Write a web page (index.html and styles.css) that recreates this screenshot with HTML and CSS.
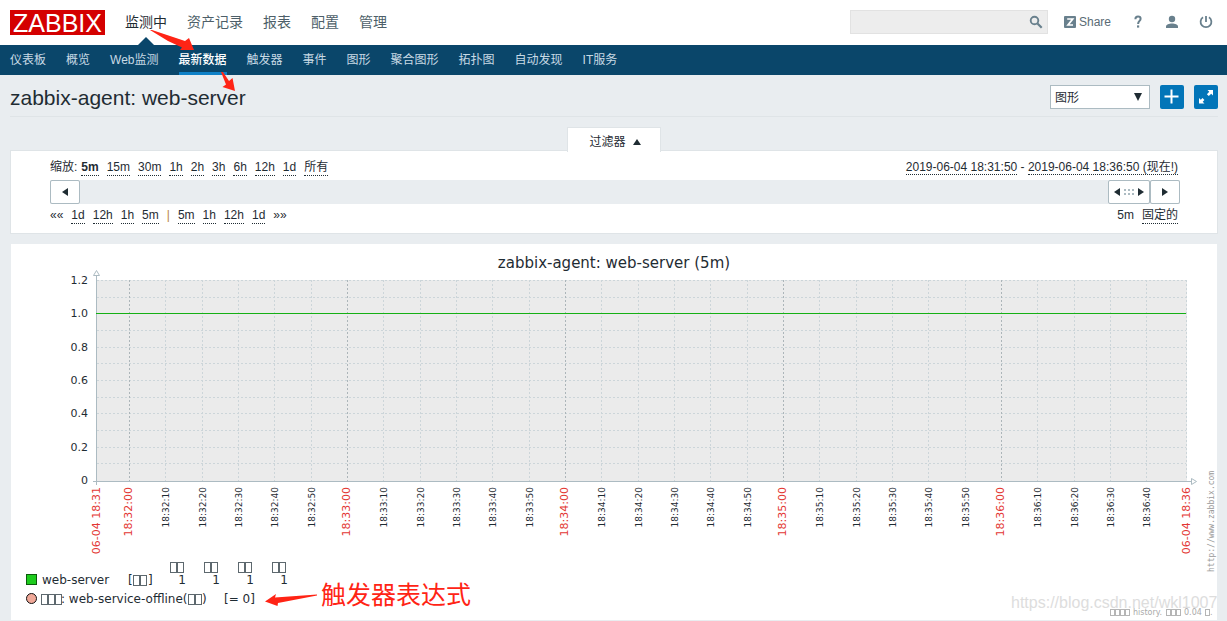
FILE: index.html
```html
<!DOCTYPE html>
<html lang="zh-CN">
<head>
<meta charset="utf-8">
<meta name="viewport" content="width=device-width, initial-scale=1">
<title>zabbix-agent: web-server</title>
<link rel="stylesheet" href="styles.css">
</head>
<body>
<header class="topbar">
  <a class="logo" href="#" aria-label="Zabbix">ZABBIX</a>
  <nav class="mainnav">
    <a class="current" href="#">监测中</a>
    <a href="#">资产记录</a>
    <a href="#">报表</a>
    <a href="#">配置</a>
    <a href="#">管理</a>
  </nav>
  <form class="search">
    <input type="text" aria-label="Search">
    <button type="button" aria-label="Search">
      <svg width="14" height="14" viewBox="0 0 14 14"><circle cx="5.5" cy="5.5" r="3.8" fill="none" stroke="#69808d" stroke-width="1.9"/><path d="M8.5 8.5L12.7 12.7" stroke="#69808d" stroke-width="2.2"/></svg>
    </button>
  </form>
  <div class="tools">
    <a class="share" href="#">
      <svg width="12" height="12" viewBox="0 0 12 12"><rect width="12" height="12" rx="1" fill="#69808d"/><path d="M3.2 3H8.7L4 9H9" fill="none" stroke="#fff" stroke-width="1.7"/></svg>
      <span>Share</span>
    </a>
    <a href="#" aria-label="Help"><svg width="14" height="14" viewBox="0 0 14 14"><path d="M4.4 4.2C4.4 2 5.6 1.5 7 1.5C8.6 1.5 9.6 2.4 9.6 3.8C9.6 5.9 7.1 6 7.1 9" fill="none" stroke="#69808d" stroke-width="2"/><rect x="6" y="10.400" width="2.200" height="2.200" fill="#69808d"/></svg></a>
    <a href="#" aria-label="Profile"><svg width="14" height="14" viewBox="0 0 14 14"><circle cx="7" cy="4" r="3.2" fill="#69808d"/><path d="M1 13V11.500C1 9.500 4 8.500 7 8.500S13 9.500 13 11.500V13Z" fill="#69808d"/></svg></a>
    <a href="#" aria-label="Sign out"><svg width="14" height="14" viewBox="0 0 14 14"><path d="M4 2.300A5.400 5.400 0 1 0 10 2.300M7 1V7" fill="none" stroke="#69808d" stroke-width="1.800"/></svg></a>
  </div>
</header>
<nav class="subnav">
  <a href="#">仪表板</a>
  <a href="#">概览</a>
  <a href="#">Web监测</a>
  <a class="current" href="#">最新数据</a>
  <a href="#">触发器</a>
  <a href="#">事件</a>
  <a href="#">图形</a>
  <a href="#">聚合图形</a>
  <a href="#">拓扑图</a>
  <a href="#">自动发现</a>
  <a href="#">IT服务</a>
</nav>
<main class="page">
  <div class="pagehead">
    <h1>zabbix-agent: web-server</h1>
    <div class="picker">
      <select aria-label="View"><option>图形</option><option>值</option></select>
      <svg width="8" height="8" viewBox="0 0 8 8"><path d="M0 0H8L4 8Z" fill="#1f2c33"/></svg>
    </div>
    <button class="action" type="button" aria-label="Add"><svg width="24" height="24" viewBox="0 0 24 24"><path d="M11.500 4.500V18.500M4.500 11.500H18.500" stroke="#fff" stroke-width="2"/></svg></button>
    <button class="action" type="button" aria-label="Fullscreen"><svg width="24" height="24" viewBox="0 0 24 24"><path d="M13.500 5H19V10.500L17.200 8.700L14.800 11.100L12.900 9.200L15.300 6.800ZM5 13L6.800 14.800L8.500 13.100L10.400 15L8.700 16.700L10.500 18.500H5Z" fill="#fff"/></svg></button>
  </div>
  <div class="tabrow">
    <button class="filtertab" type="button">过滤器<svg width="8" height="6" viewBox="0 0 8 6"><path d="M4 0L8 6H0Z" fill="#1f2c33"/></svg></button>
  </div>
  <section class="filter">
    <div class="line">
      <div class="links">
        <span class="caption">缩放:</span>
        <a class="selected" href="#">5m</a><a href="#">15m</a><a href="#">30m</a><a href="#">1h</a><a href="#">2h</a><a href="#">3h</a><a href="#">6h</a><a href="#">12h</a><a href="#">1d</a><a href="#">所有</a>
      </div>
      <div class="period"><a href="#">2019-06-04 18:31:50</a> - <a href="#">2019-06-04 18:36:50 (现在!)</a></div>
    </div>
    <div class="scrollbar">
      <button class="step" type="button" aria-label="Back"><svg width="6" height="8" viewBox="0 0 6 8"><path d="M6 0V8L0 4Z" fill="#1f2c33"/></svg></button>
      <button class="grip" type="button" aria-label="Range"><svg width="30" height="8" viewBox="0 0 30 8"><path d="M6 0V8L0 4ZM24 0V8L30 4Z" fill="#1f2c33"/><path d="M10 1h2v2h-2zM14 1h2v2h-2zM18 1h2v2h-2zM10 5h2v2h-2zM14 5h2v2h-2zM18 5h2v2h-2z" fill="#acbbc2"/></svg></button>
      <button class="step" type="button" aria-label="Forward"><svg width="6" height="8" viewBox="0 0 6 8"><path d="M0 0V8L6 4Z" fill="#1f2c33"/></svg></button>
    </div>
    <div class="line">
      <div class="links">
        <span>««</span><a href="#">1d</a><a href="#">12h</a><a href="#">1h</a><a href="#">5m</a><span class="divider">|</span><a href="#">5m</a><a href="#">1h</a><a href="#">12h</a><a href="#">1d</a><span>»»</span>
      </div>
      <div class="links"><span>5m</span><a href="#">固定的</a></div>
    </div>
  </section>
  <section class="graph">
    <svg class="chart" viewBox="11 244 1206 376" role="img" aria-label="zabbix-agent: web-server (5m)">
      <text class="title" x="614" y="268">zabbix-agent: web-server (5m)</text>
      <rect x="97" y="280" width="1090" height="201" fill="#ebebeb"/>
      <g id="grid"></g>
      <path d="M96.500 275V485M93 481.500H1191" stroke="#acbbc2" fill="none"/>
      <path d="M93.500 275.500H99.500L96.500 270.500ZM1191.500 478.500V484.500L1196.500 481.500Z" fill="#fff" stroke="#acbbc2"/>
      <path d="M96 313.500H1186" stroke="#14b014"/>
      <g id="labels"></g>
      <text class="credit" transform="translate(1214 572) rotate(-90)">http://www.zabbix.com</text>

      <rect x="26.500" y="574.500" width="10" height="10" fill="#1dcb1d" stroke="#0b5a0b"/>
      <text class="key" x="42" y="584">web-server</text>
      <text class="key" x="128" y="584">[</text>
      <text class="key" x="148" y="584">]</text>
      <g class="key stats">
        <text x="186" y="584">1</text><text x="220" y="584">1</text><text x="254" y="584">1</text><text x="288" y="584">1</text>
      </g>
      <circle cx="31.500" cy="598.500" r="5" fill="#f0a898" stroke="#111"/>
      <text class="key" x="61" y="603">: web-service-offline(</text>
      <text class="key" x="202" y="603">)</text>
      <text class="key" x="224" y="603">[= 0]</text>
      <g id="boxes"></g>

      <text class="watermark" x="1011" y="608">https://blog.csdn.net/wkl1007</text>
      <text class="timing" x="1133" y="615">history.</text>
      <text class="timing" x="1184" y="615">0.04</text>
      <text class="timing" x="1210" y="615">.</text>
    </svg>
  </section>
</main>
<div class="notes">
  <svg width="480" height="621" viewBox="0 0 480 621">
    <path d="M150 30L152 30L185 41L189 38L194 50L180 50L182 47.500L168 41ZM221 72L223 72L229 81L232.500 78L235 91L222.500 87L226 84.500ZM265 601.500L276 594L275 597.500L317 594.500V595.500L278 603L277.500 606Z" fill="#ff2415"/>
  </svg>
  <span class="note">触发器表达式</span>
</div>
<script src="chart.js"></script>
</body>
</html>
```
FILE: styles.css
```css
* { box-sizing: border-box; }
body {
  margin: 0;
  position: relative;
  background: #e9edf0;
  color: #1f2c33;
  font: 12px/16px "Liberation Sans", "Noto Sans CJK SC", sans-serif;
}
a { color: inherit; text-decoration: none; }
svg { display: block; }
button, input, select { font: inherit; color: inherit; margin: 0; padding: 0; }

.topbar { display: flex; align-items: center; height: 45px; padding: 0 14px 0 10px; background: #fff; }
.logo {
  width: 95px; height: 25px; background: #d40000; color: #fff;
  font: 25px/26px "Liberation Sans", sans-serif; text-align: center; white-space: nowrap;
}
.mainnav { display: flex; gap: 20px; margin-left: 20px; font-size: 14px; line-height: 45px; color: #4d5f69; }
.mainnav .current { position: relative; color: #1f2c33; }
.mainnav .current::after {
  content: ""; position: absolute; left: 50%; bottom: 0; margin-left: -8px;
  border: 8px solid transparent; border-top: 0; border-bottom-color: #0a466a;
}
.search { display: flex; align-items: center; width: 198px; height: 24px; margin: 0 0 1px auto; background: #ededed; border: 1px solid #e2e2e2; }
.search input { flex: 1; min-width: 0; height: 22px; border: 0; background: none; }
.search button { border: 0; background: none; padding-right: 4px; }
.tools { display: flex; align-items: center; gap: 20px; margin: 0 0 1px 16px; color: #5a6b75; }
.share { display: flex; align-items: center; gap: 3px; }

.subnav { display: flex; gap: 20px; height: 30px; padding: 0 10px; background: #0a466a; color: #c8dae5; line-height: 30px; }
.subnav .current { color: #fff; font-weight: 500; border-bottom: 3px solid #0f81c7; }

.page { padding: 0 9px 0 10px; }
.pagehead { display: flex; align-items: center; gap: 10px; height: 42px; padding-top: 2px; border-bottom: 1px solid #dfe4e7; }
h1 { flex: 1; margin: 0; font-size: 21px; line-height: 24px; font-weight: 400; padding-top: 3px; }
.picker { position: relative; width: 100px; height: 24px; }
.picker select { appearance: none; width: 100%; height: 100%; padding: 2px 4px 0; border: 1px solid #acbbc2; border-radius: 0; background: #fff; }
.picker svg { position: absolute; right: 8px; top: 8px; pointer-events: none; }
.action { width: 24px; height: 24px; border: 0; border-radius: 2px; background: #0275b8; }

.tabrow { display: flex; justify-content: center; padding-top: 10px; }
.filtertab {
  display: flex; align-items: center; justify-content: center; gap: 7px;
  width: 94px; height: 25px; padding: 3px 0 0 2px; margin-bottom: -2px; position: relative;
  background: #fff; border: 1px solid #dfe4e7; border-bottom: 0;
}
.filter { padding: 8px 37px 9px 39px; background: #fff; border: 1px solid #dfe4e7; }
.line { display: flex; justify-content: space-between; padding-right: 2px; }
.links { display: flex; gap: 8px; }
.line a { border-bottom: 1px dotted #1f2c33; }
.caption { margin-right: -4px; }
.selected { font-weight: 700; }
.divider { color: #b8863c; }
.scrollbar { display: flex; height: 24px; margin: 4px 0 3px; background: #e9edf0; }
.step, .grip { display: flex; align-items: center; justify-content: center; width: 30px; background: #fff; border: 1px solid #acbbc2; border-radius: 2px; }
.grip { width: 42px; margin-left: auto; }

.graph { margin-top: 10px; padding: 0 1px; }
.chart { width: 100%; height: auto; background: #fff; font-family: "DejaVu Sans", sans-serif; fill: #1f2c33; }
.title { font-size: 15px; text-anchor: middle; }
.value { font-size: 11px; text-anchor: end; }
.major { font-size: 11px; text-anchor: end; fill: #e33734; }
.minor { font-size: 9px; text-anchor: end; }
.key { font-size: 12px; }
.stats { text-anchor: end; }
.credit { font: 8px "DejaVu Sans Mono", monospace; fill: #999; }
.timing { font-size: 8px; fill: #aaa; }
.watermark { font: 16px "Liberation Sans", sans-serif; fill: #ddd; }

.notes { position: absolute; left: 0; top: 0; pointer-events: none; }
.note { position: absolute; left: 321px; top: 578px; color: #ff2415; font-size: 25px; line-height: 34px; white-space: nowrap; }
```
FILE: chart.js
```js
const NS = "http://www.w3.org/2000/svg";
function add(parent, name, attrs, text) {
  const el = document.createElementNS(NS, name);
  for (const key in attrs) el.setAttribute(key, attrs[key]);
  if (text) el.textContent = text;
  document.getElementById(parent).appendChild(el);
}

const left = 96, right = 1186, top_ = 280, bottom = 480;

for (let i = 0; i < 12; i++) {
  const y = Math.round(top_ + i * 200 / 12) + 0.5;
  add("grid", "path", { d: `M${left + 1} ${y}H${right}`, stroke: "#ccd5d9", "stroke-dasharray": "2 2" });
}
["1.2", "1.0", "0.8", "0.6", "0.4", "0.2", "0"].forEach((label, i) => {
  add("labels", "text", { class: "value", x: 88, y: Math.round(top_ + 4 + i * 200 / 6) }, label);
});

function timeLabel(x, label, kind) {
  const shift = kind === "major" ? 3 : 4;
  add("labels", "text", { class: kind, transform: `translate(${x + shift} 487) rotate(-90)` }, label);
}

const pad = n => String(n).padStart(2, "0");
timeLabel(left + 1, "06-04 18:31", "major");
for (let s = 0; s <= 280; s += 10) {
  const x = Math.round(129 + s * 3.6333);
  const major = s % 60 === 0;
  add("grid", "path", { d: `M${x + 0.5} ${top_}V${bottom + 1}`, stroke: major ? "#acb5b9" : "#ccd5d9", "stroke-dasharray": "2 2" });
  timeLabel(x, `18:${32 + Math.floor(s / 60)}:${pad(s % 60)}`, major ? "major" : "minor");
}
add("grid", "path", { d: `M${right + 0.5} ${top_}V${bottom}`, stroke: "#ccd5d9", "stroke-dasharray": "2 2" });
timeLabel(right + 1, "06-04 18:36", "major");

function boxes(x, y, count, w, h, stroke) {
  for (let i = 0; i < count; i++) {
    add("boxes", "rect", { x: x + i * w + 0.5, y: y + 0.5, width: w - 1, height: h - 1, fill: "none", stroke });
  }
}
const ink = "#5d686e", pale = "#b5b5b5";
[170, 204, 238, 272].forEach(x => boxes(x, 562, 2, 7, 11, ink));
boxes(133, 575, 2, 7, 11, ink);
boxes(41, 594, 3, 7, 11, ink);
boxes(188, 594, 2, 7, 11, ink);
boxes(1110, 609, 4, 5, 7, pale);
boxes(1166, 609, 3, 5, 7, pale);
boxes(1205, 609, 1, 5, 7, pale);
```
